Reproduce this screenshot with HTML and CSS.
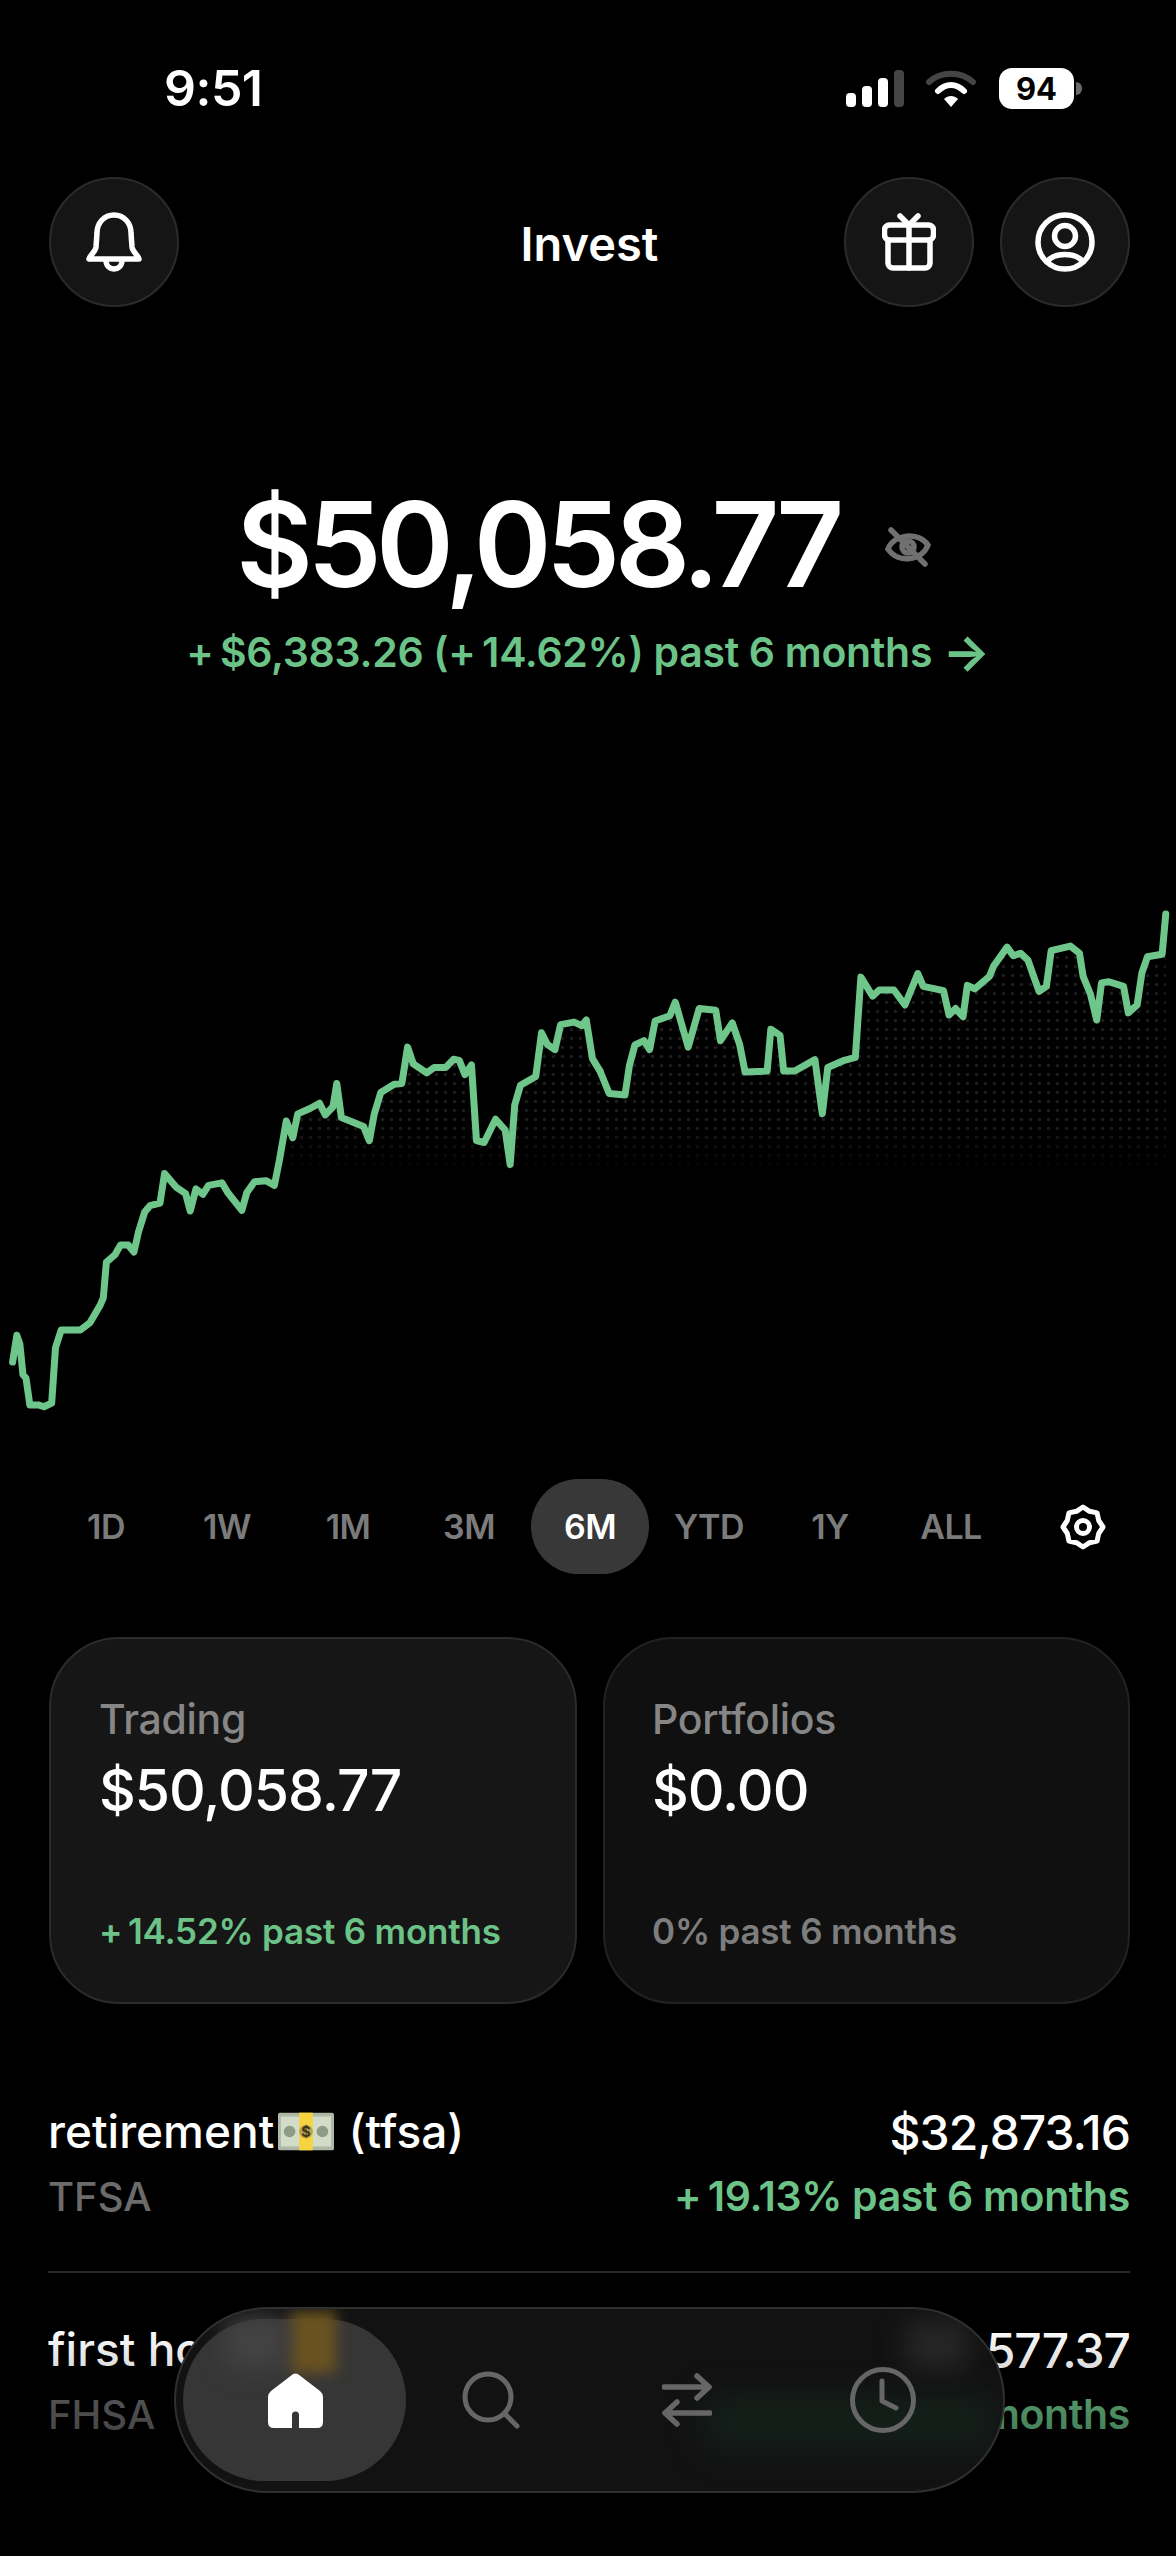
FILE: index.html
```html
<!DOCTYPE html>
<html>

	<head>
		<meta charset="utf-8">
		<title>Invest</title>
		<link rel="stylesheet" href="styles.css">
	</head>

	<body>
		<header class="status">
			<span class="time">9:51</span>
			<div class="status-icons">
				<svg class="signal" width="58" height="37" viewBox="0 0 58 37">
					<rect x="0" y="23" width="10" height="14" rx="4" fill="#fff"/>
					<rect x="16" y="16" width="10" height="21" rx="4" fill="#fff"/>
					<rect x="32" y="8" width="10" height="29" rx="4" fill="#fff"/>
					<rect x="48" y="0" width="10" height="37" rx="4" fill="#454545"/>
				</svg>
				<svg class="wifi" width="50" height="37" viewBox="0 0 50 37">
					<path d="M3 12 C15 1 35 1 47 12" fill="none" stroke="#454545" stroke-width="6" stroke-linecap="round"/>
					<path d="M12 21 C20 13 30 13 38 21" fill="none" stroke="#fff" stroke-width="6" stroke-linecap="round"/>
					<path d="M18 29 C22 25 28 25 32 29 L25 37 Z" fill="#fff"/>
				</svg>
				<div class="battery"><span class="battery-level">94</span><i class="battery-nub"></i></div>
			</div>
		</header>

		<section class="topbar">
			<div class="topbar-left">
				<button class="round-btn">
					<svg width="56" height="60" viewBox="0 0 56 60" fill="none" stroke="#fff" stroke-width="5.500" stroke-linejoin="round" stroke-linecap="round">
						<path d="M28 3 C18 3 11 11 11 21 L10 35 C9.500 40 4 43 3 47 H53 C52 43 46.500 40 46 35 L45 21 C45 11 38 3 28 3 Z"/>
						<path d="M20 48 C20 60 36 60 36 48"/>
					</svg>
				</button>
			</div>
			<h1 class="title">Invest</h1>
			<div class="topbar-right">
				<button class="round-btn">
					<svg width="54" height="58" viewBox="0 0 54 58" fill="none" stroke="#fff" stroke-width="5.500" stroke-linejoin="round" stroke-linecap="round">
						<rect x="2.500" y="12" width="49" height="15" rx="5"/>
						<path d="M6 27 V50 a5 5 0 0 0 5 5 H43 a5 5 0 0 0 5 -5 V27"/>
						<path d="M27 12 V55"/>
						<path d="M18 3 L27 12 L36 3"/>
					</svg>
				</button>
				<button class="round-btn">
					<svg width="60" height="60" viewBox="0 0 60 60" fill="none" stroke="#fff" stroke-width="5.500" stroke-linecap="round">
						<circle cx="30" cy="30" r="27"/>
						<circle cx="30" cy="24" r="10.500"/>
						<path d="M12 50 C19 40 41 40 48 50"/>
					</svg>
				</button>
			</div>
		</section>

		<section class="hero">
			<div class="balance-row">
				<span class="balance">$50,058.77</span>
				<svg width="46" height="40" viewBox="0 0 46 40" fill="none" stroke="#707070" stroke-width="5.500" stroke-linecap="round">
					<path d="M3 22 C9 7 33 4 43 18 C37 34 13 37 3 22 Z"/>
					<circle cx="23" cy="20" r="6"/>
					<path d="M6 3 L40 37"/>
				</svg>
			</div>
			<p class="change">+&#8201;$6,383.26 (+&#8201;14.62%) past 6 months <span class="arrow">→</span></p>
		</section>

		<svg class="chart" width="1176" height="560" viewBox="0 880 1176 560">
			<defs>
				<pattern id="dots" width="9" height="9" patternUnits="userSpaceOnUse">
					<circle cx="4.500" cy="4.500" r="1.700" fill="#1d1d1d"/>
				</pattern>
				<linearGradient id="fadeDown" x1="0" y1="0" x2="0" y2="1">
					<stop offset="0.82" stop-color="#fff"/>
					<stop offset="1" stop-color="#000"/>
				</linearGradient>
				<mask id="dotsFade" maskUnits="userSpaceOnUse" x="0" y="880" width="1176" height="296">
					<rect x="0" y="880" width="1176" height="296" fill="url(#fadeDown)"/>
				</mask>
				<clipPath id="underLine">
					<polygon transform="translate(0 880) scale(.3827 .3571)" points="33,1350 44,1275 52,1300 60,1385 68,1395 78,1470 100,1470 115,1475 135,1465 145,1310 160,1260 210,1260 235,1240 262,1190 270,1170 278,1070 300,1050 315,1022 335,1022 350,1042 362,985 378,930 392,912 418,905 430,822 460,860 485,878 497,927 512,865 530,880 545,855 580,848 595,875 632,925 645,875 665,845 695,842 717,855 730,785 748,675 765,722 778,655 810,640 835,625 850,658 870,635 880,570 892,665 950,690 965,730 978,655 995,595 1030,572 1050,570 1065,468 1080,515 1115,540 1135,525 1165,525 1185,502 1200,505 1215,545 1232,518 1245,730 1265,735 1295,670 1320,700 1333,797 1345,630 1360,575 1400,550 1415,428 1430,460 1450,475 1465,405 1500,398 1520,408 1532,392 1548,500 1568,535 1568,1568 33,1568"/>
					<polygon transform="translate(600 880) scale(.3674 .3571)" points="0,535 25,598 68,602 80,520 95,462 120,450 135,475 150,395 190,380 205,342 240,468 270,360 315,365 328,450 360,400 380,460 395,538 455,535 465,418 490,435 500,535 530,535 585,503 605,655 620,525 665,505 695,497 710,272 742,325 760,308 800,308 830,350 865,262 880,298 935,310 950,378 968,360 988,383 1000,295 1020,305 1060,270 1072,240 1108,188 1125,212 1145,205 1165,225 1195,312 1215,298 1228,198 1280,185 1305,205 1315,270 1335,320 1352,392 1365,288 1385,285 1425,298 1438,372 1462,350 1475,260 1490,215 1530,208 1540,95 1540,1568 0,1568"/>
				</clipPath>
			</defs>
			<g clip-path="url(#underLine)">
				<rect x="0" y="880" width="1176" height="296" fill="url(#dots)" mask="url(#dotsFade)"/>
			</g>
			<g fill="none" stroke="#6fc68b" stroke-width="7" stroke-linejoin="round" stroke-linecap="round">
				<polyline vector-effect="non-scaling-stroke" transform="translate(0 881) scale(.3827 .3571)" points="33,1350 44,1275 52,1300 60,1385 68,1395 78,1470 100,1470 115,1475 135,1465 145,1310 160,1260 210,1260 235,1240 262,1190 270,1170 278,1070 300,1050 315,1022 335,1022 350,1042 362,985 378,930 392,912 418,905 430,822 460,860 485,878 497,927 512,865 530,880 545,855 580,848 595,875 632,925 645,875 665,845 695,842 717,855 730,785 748,675 765,722 778,655 810,640 835,625 850,658 870,635 880,570 892,665 950,690 965,730 978,655 995,595 1030,572 1050,570 1065,468 1080,515 1115,540 1135,525 1165,525 1185,502 1200,505 1215,545 1232,518 1245,730 1265,735 1295,670 1320,700 1333,797 1345,630 1360,575 1400,550 1415,428 1430,460 1450,475 1465,405 1500,398 1520,408 1532,392 1548,500 1568,535"/>
				<polyline vector-effect="non-scaling-stroke" transform="translate(600 881) scale(.3674 .3571)" points="0,535 25,598 68,602 80,520 95,462 120,450 135,475 150,395 190,380 205,342 240,468 270,360 315,365 328,450 360,400 380,460 395,538 455,535 465,418 490,435 500,535 530,535 585,503 605,655 620,525 665,505 695,497 710,272 742,325 760,308 800,308 830,350 865,262 880,298 935,310 950,378 968,360 988,383 1000,295 1020,305 1060,270 1072,240 1108,188 1125,212 1145,205 1165,225 1195,312 1215,298 1228,198 1280,185 1305,205 1315,270 1335,320 1352,392 1365,288 1385,285 1425,298 1438,372 1462,350 1475,260 1490,215 1530,208 1540,95"/>
			</g>
		</svg>

		<nav class="ranges">
			<a class="range">1D</a>
			<a class="range">1W</a>
			<a class="range">1M</a>
			<a class="range">3M</a>
			<a class="range active">6M</a>
			<a class="range">YTD</a>
			<a class="range">1Y</a>
			<a class="range">ALL</a>
			<svg class="gear" width="46" height="46" viewBox="0 0 46 46" fill="none" stroke="#fff" stroke-width="5" stroke-linejoin="round">
				<polygon points="23,3 29.500,7.300 37.100,8.900 38.700,16.500 43,23 38.700,29.500 37.100,37.100 29.500,38.700 23,43 16.500,38.700 8.900,37.100 7.300,29.500 3,23 7.300,16.500 8.900,8.900 16.500,7.300"/>
				<circle cx="23" cy="23" r="6.500"/>
			</svg>
		</nav>

		<section class="cards">
			<div class="card card-trading">
				<span class="card-label">Trading</span>
				<span class="card-value">$50,058.77</span>
				<span class="card-change green">+&#8201;14.52% past 6 months</span>
			</div>
			<div class="card card-portfolios">
				<span class="card-label">Portfolios</span>
				<span class="card-value">$0.00</span>
				<span class="card-change">0% past 6 months</span>
			</div>
		</section>

		<ul class="accounts">
			<li class="account">
				<div class="account-line">
					<span class="account-name">retirement<svg class="money" width="58" height="39" viewBox="0 0 58 39">
						<rect x="0" y="0" width="58" height="39" rx="2" fill="#aeb8a4"/>
						<rect x="3" y="4" width="52" height="31" fill="#d3dcc8"/>
						<circle cx="12" cy="19.500" r="6" fill="#8d9c86"/>
						<circle cx="46" cy="19.500" r="6" fill="#8d9c86"/>
						<rect x="22" y="0" width="14" height="39" fill="#f6d33f"/>
						<circle cx="29" cy="19.500" r="7" fill="#b9a24a"/>
						<text x="29" y="25" text-anchor="middle" font-size="15" font-weight="700" fill="#3c3520">$</text>
					</svg> (tfsa)</span>
					<span class="account-value">$32,873.16</span>
				</div>
				<div class="account-line">
					<span class="account-type">TFSA</span>
					<span class="account-change green">+&#8201;19.13% past 6 months</span>
				</div>
			</li>
			<li class="account">
				<div class="account-line">
					<span class="account-name">first home</span>
					<span class="account-value">577.37</span>
				</div>
				<div class="account-line">
					<span class="account-type">FHSA</span>
					<span class="account-change green">past 6 months</span>
				</div>
			</li>
		</ul>

		<div class="bottom-fade"></div>

		<nav class="tabbar">
			<span class="glow glow-yellow"></span>
			<span class="glow glow-grey"></span>
			<span class="glow glow-number"></span>
			<span class="glow glow-green"></span>
			<a class="tab active">
				<svg width="55" height="55" viewBox="0 0 55 55">
					<path d="M24.500 1.500 Q27.500 -0.500 30.500 1.500 L52 18 Q55 20.500 55 24 V49 Q55 55 49 55 H31 V42 Q31 38.500 27.500 38.500 Q24 38.500 24 42 V55 H6 Q0 55 0 49 V24 Q0 20.500 3 18 Z" fill="#fff"/>
				</svg>
			</a>
			<a class="tab">
				<svg width="58" height="58" viewBox="0 0 58 58" fill="none" stroke="#666" stroke-width="5" stroke-linecap="round">
					<circle cx="26" cy="26" r="23"/>
					<path d="M43 43 L55 55"/>
				</svg>
			</a>
			<a class="tab">
				<svg width="50" height="54" viewBox="0 0 50 54" fill="none" stroke="#666" stroke-width="5.500" stroke-linecap="round" stroke-linejoin="round">
					<path d="M2 14 H47 M35 3 L47 14 L35 25"/>
					<path d="M48 40 H3 M15 29 L3 40 L15 51"/>
				</svg>
			</a>
			<a class="tab">
				<svg width="66" height="66" viewBox="0 0 66 66" fill="none" stroke="#666" stroke-width="5" stroke-linecap="round" stroke-linejoin="round">
					<circle cx="33" cy="33" r="30.500"/>
					<path d="M32 14 V34 L46 41"/>
				</svg>
			</a>
		</nav>
	</body>

</html>
```
FILE: styles.css
```css
* {
	box-sizing: border-box;
}
html, body {
	margin: 0;
	padding: 0;
}
body {
	position: relative;
	width: 1176px;
	height: 2556px;
	overflow: hidden;
	background-color: #000;
	color: #fff;
	font-family: Inter, "Liberation Sans", sans-serif;
}
ul, li, h1, p {
	margin: 0;
	padding: 0;
	list-style: none;
}
svg {
	display: block;
}
.green {
	color: #6cc388;
}

/* status bar */
.status {
	display: flex;
	justify-content: space-between;
	align-items: center;
	height: 84px;
	margin: 46px 0 47px;
	padding: 0 102px 0 164px;
}
.time {
	font-size: 50px;
	font-weight: 600;
	letter-spacing: -0.500px;
}
.status-icons {
	display: flex;
	align-items: center;
}
.wifi {
	margin-left: 22px;
}
.battery {
	position: relative;
	margin-left: 23px;
}
.battery-level {
	display: block;
	width: 75px;
	height: 41px;
	border-radius: 13px;
	background: #fff;
	color: #000;
	font-size: 31px;
	font-weight: 700;
	line-height: 41px;
	text-align: center;
}
.battery-nub {
	position: absolute;
	right: -8px;
	top: 14px;
	width: 6px;
	height: 13px;
	border-radius: 0 6px 6px 0;
	background: #6a6a6a;
}

/* top bar */
.topbar {
	display: grid;
	grid-template-columns: 1fr auto 1fr;
	align-items: center;
	padding: 0 46px 0 49px;
}
.topbar-right {
	display: flex;
	justify-content: flex-end;
	gap: 26px;
}
.title {
	padding-top: 2px;
	font-size: 47px;
	font-weight: 600;
}
.round-btn {
	display: flex;
	justify-content: center;
	align-items: center;
	width: 130px;
	height: 130px;
	padding: 0;
	border: 2px solid #2b2b2b;
	border-radius: 50%;
	background: #151515;
}

/* balance */
.hero {
	margin-top: 177px;
}
.balance-row {
	display: flex;
	justify-content: center;
	align-items: center;
	gap: 46px;
	padding-right: 9px;
}
.balance {
	font-size: 118px;
	font-weight: 600;
	line-height: 120px;
	letter-spacing: -5.600px;
}
.balance-row svg {
	margin-top: 6px;
}
.change {
	display: flex;
	justify-content: center;
	align-items: center;
	gap: 0.25em;
	height: 50px;
	margin-top: 23px;
	color: #6cc388;
	font-size: 41px;
	font-weight: 600;
	line-height: 50px;
	letter-spacing: -0.300px;
}
.arrow {
	font-size: 50px;
	font-weight: 700;
}

/* chart */
.chart {
	margin-top: 202px;
}

/* ranges */
.ranges {
	display: flex;
	align-items: center;
	gap: 3px;
	height: 95px;
	margin-top: 40px;
	padding-left: 47px;
}
.range {
	width: 118px;
	height: 95px;
	border-radius: 48px;
	color: #7b7b7b;
	font-size: 34px;
	font-weight: 600;
	line-height: 95px;
	text-align: center;
	letter-spacing: -0.500px;
}
.range.active {
	margin-right: -2px;
	background: #383838;
	color: #fff;
}
.gear {
	margin-left: 47px;
}

/* cards */
.cards {
	display: grid;
	grid-template-columns: 528px 527px;
	gap: 26px;
	margin-top: 63px;
	padding-left: 49px;
}
.card {
	display: flex;
	flex-direction: column;
	height: 367px;
	padding: 57px 48px 49px;
	border: 2px solid #2b2b2b;
	border-radius: 70px;
}
.card-trading {
	background: #161616;
}
.card-portfolios {
	padding-left: 47px;
	background: #101010;
	border-color: #222;
}
.card-label {
	color: #868686;
	font-size: 41px;
	font-weight: 500;
	line-height: 46px;
	letter-spacing: -0.300px;
}
.card-value {
	margin-top: 16px;
	font-size: 57px;
	font-weight: 500;
	line-height: 66px;
	letter-spacing: -1px;
}
.card-change {
	margin-top: auto;
	color: #7d7d7d;
	font-size: 35px;
	font-weight: 600;
	line-height: 44px;
	letter-spacing: -0.200px;
}
.card-change.green {
	color: #6cc388;
}

/* accounts */
.accounts {
	margin-top: 99px;
	padding: 0 46px 0 48px;
}
.account {
	padding-bottom: 50px;
	border-bottom: 2px solid #2a2a2a;
}
.account + .account {
	padding-top: 48px;
	border-bottom: 0;
}
.account-line {
	display: flex;
	justify-content: space-between;
	align-items: center;
	height: 56px;
}
.account-line + .account-line {
	height: 50px;
	margin-top: 12px;
}
.account-name {
	display: flex;
	align-items: center;
	font-size: 46px;
	font-weight: 500;
	white-space: pre;
}
.money {
	width: 56px;
	margin: 0 2px 0 4px;
}
.account-value {
	padding-top: 3px;
	font-size: 48px;
	font-weight: 500;
	letter-spacing: -1px;
}
.account-type {
	color: #6b6b6b;
	font-size: 40px;
	font-weight: 500;
}
.account-change {
	font-size: 41px;
	font-weight: 600;
	letter-spacing: -0.350px;
}

/* fades the list out behind the tab bar */
.bottom-fade {
	position: absolute;
	left: 0;
	right: 0;
	bottom: 0;
	height: 230px;
	background: linear-gradient(rgba(0, 0, 0, 0), rgba(0, 0, 0, 0.75));
}

/* tab bar */
.tabbar {
	position: absolute;
	left: 174px;
	top: 2307px;
	display: flex;
	align-items: center;
	width: 831px;
	height: 186px;
	padding-left: 21px;
	overflow: hidden;
	border: 2px solid #303030;
	border-radius: 93px;
	background: #121212;
}
.tab {
	display: flex;
	justify-content: center;
	align-items: center;
	width: 196px;
}
.tab svg {
	position: relative;
	z-index: 2;
}
.tab.active::before {
	content: "";
	position: absolute;
	left: 7px;
	top: 10px;
	width: 223px;
	height: 162px;
	border-radius: 81px;
	background: #363636;
}
.glow {
	position: absolute;
	z-index: 1;
}
.glow-yellow {
	left: 114px;
	top: 2px;
	width: 46px;
	height: 62px;
	background: #6b5320;
	filter: blur(7px);
}
.glow-grey {
	left: 730px;
	top: 12px;
	width: 62px;
	height: 48px;
	background: #262626;
	filter: blur(12px);
}
.glow-number {
	left: 50px;
	top: 8px;
	width: 60px;
	height: 50px;
	background: #434343;
	filter: blur(12px);
}
.glow-green {
	left: 530px;
	top: 88px;
	width: 290px;
	height: 50px;
	background: #14201a;
	filter: blur(16px);
}
```
